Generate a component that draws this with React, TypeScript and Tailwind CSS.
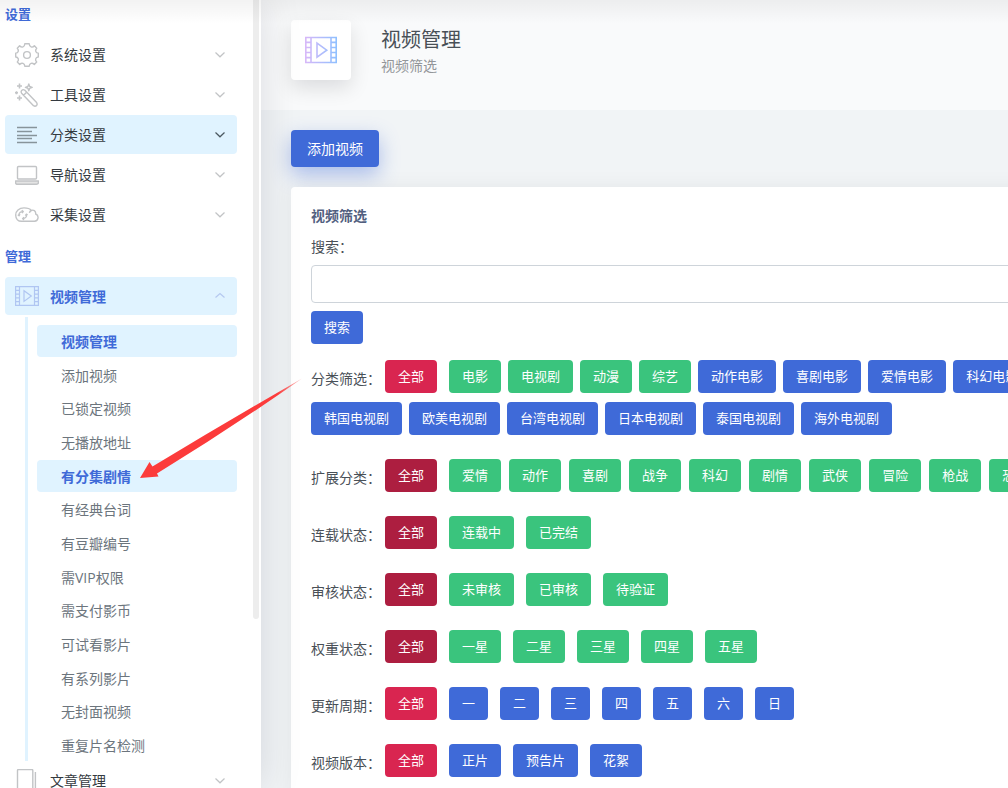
import React from "react";

const SETTINGS = [
  { label: "系统设置", icon: "gear" },
  { label: "工具设置", icon: "wand" },
  { label: "分类设置", icon: "lines", active: true },
  { label: "导航设置", icon: "laptop" },
  { label: "采集设置", icon: "cloud" },
];

const VIDEO_MENU = [
  "视频管理",
  "添加视频",
  "已锁定视频",
  "无播放地址",
  "有分集剧情",
  "有经典台词",
  "有豆瓣编号",
  "需VIP权限",
  "需支付影币",
  "可试看影片",
  "有系列影片",
  "无封面视频",
  "重复片名检测",
];

const TONES = {
  red: "bg-[#d92550]",
  crimson: "bg-[#ad1e40]",
  green: "bg-[#3ac47d]",
  blue: "bg-[#3f6ad8]",
};

type Tone = keyof typeof TONES;

const STATUS_ROWS: { label: string; all: Tone; tone: Tone; items: string[] }[] = [
  { label: "连载状态", all: "crimson", tone: "green", items: ["连载中", "已完结"] },
  { label: "审核状态", all: "crimson", tone: "green", items: ["未审核", "已审核", "待验证"] },
  { label: "权重状态", all: "crimson", tone: "green", items: ["一星", "二星", "三星", "四星", "五星"] },
  { label: "更新周期", all: "red", tone: "blue", items: ["一", "二", "三", "四", "五", "六", "日"] },
  { label: "视频版本", all: "red", tone: "blue", items: ["正片", "预告片", "花絮"] },
];

const FilmIcon = ({ className, stroke = "currentColor" }: { className: string; stroke?: string }) => (
  <svg viewBox="0 0 24 24" className={className} fill="none" stroke={stroke} strokeWidth="1.2">
    <defs>
      <linearGradient id="film" gradientUnits="userSpaceOnUse" x1="0" y1="0" x2="24" y2="0">
        <stop offset="0" stopColor="#d8b8f8" />
        <stop offset="1" stopColor="#8fc0ff" />
      </linearGradient>
    </defs>
    <path d="M.6 2.600h22.800v18.800H.6zM4.500 2.500v19M19.500 2.500v19" />
    <path d="M.5 6.300h4M.5 10.100h4M.5 13.900h4M.5 17.700h4M19.500 6.300h4M19.500 10.100h4M19.500 13.900h4M19.500 17.700h4" />
    <path d="M9 6.800v10.600l7.300-5.300z" />
  </svg>
);

const MenuIcon = ({ name }: { name: string }) => {
  const props = {
    viewBox: "0 0 24 24",
    className: "size-6 shrink-0",
    fill: "none",
    stroke: "currentColor",
    strokeWidth: 1.4,
    strokeLinejoin: "round" as const,
  };
  if (name === "gear")
    return (
      <svg {...props}>
        <circle cx="12" cy="12" r="3.400" />
        <path d="M9.800.8h4.400q.1 2.500 1.900 3.100 1.700.7 3.300-1.200l2.300 2.500q-1.500 1.800-.9 3.200.6 1.600 2.500 1.700v3.900q-2 .1-2.600 1.800-.6 1.500 1 3.200l-2.400 2.400q-1.700-1.600-3.200-1-1.800.7-1.900 2.800H9.800q-.1-2.100-1.800-2.800-1.600-.6-3.300 1l-2.400-2.400q1.600-1.700 1-3.200-.7-1.700-2.600-1.800v-3.900q1.900-.1 2.500-1.700.6-1.400-.9-3.200l2.300-2.500q1.700 1.900 3.400 1.200Q9.700 3.300 9.800.8z" />
      </svg>
    );
  if (name === "wand")
    return (
      <svg {...props}>
        <path d="M6.700 7.400q1.300-1.400 2.900-.3l12 12.500q1.100 1.700-.1 3-1.400 1.200-3 .1L6.600 10.200q-1-1.400.1-2.800zM8.600 12.200l3-3" />
        <path d="M13.800 1l.9 2.500 2.500.9-2.500.9-.9 2.500-.9-2.500-2.500-.9 2.500-.9z" />
        <path d="M4.500.5v5M2 3h5M4.500 12.500v5M2 15h5M1.500 8.300v3M0 9.800h3" strokeWidth="1.600" />
      </svg>
    );
  if (name === "lines")
    return (
      <svg {...props} strokeWidth="1.400">
        <path d="M2 4.500h20M2 8.500h15M2 12.500h20M2 15.500h15M2 19.500h20" />
      </svg>
    );
  if (name === "laptop")
    return (
      <svg {...props}>
        <rect x="2.500" y="3.500" width="19" height="12.500" rx="1" />
        <path d="M.6 18h22.800v1.700q0 1.500-2 1.500H2.600q-2 0-2-1.500z" fill="#e4e4e4" />
      </svg>
    );
  if (name === "cloud")
    return (
      <svg {...props}>
        <path d="M6.500 18.300h13a3.800 3.800 0 0 0 1.200-7.300c.3-3.200-2.300-4.500-4.400-3.500C14.800 5.500 12.500 4.900 9 4.900 4 4.900.7 8 .7 12s2.500 6.300 5.800 6.300zM16.300 7.500q-1.500.7-1.900 2.300" />
        <path d="M4 12.600c-.3-2.600 1.600-4.100 3.800-4M5 11.200l-1 1.600-1.200-1M11.500 11.400c.6 2.500-1.300 4.100-3.500 4.200M10.300 12.700l1.100-1.600 1.200 1M6.700 7.200l1.600 1.400L7 10.100M9 14.100l-1.500 1.500L9 17" strokeWidth="1.300" />
      </svg>
    );
  return (
    <svg {...props}>
      <path d="M2.500 24V1.500q0-1 1-1h13.300q1 0 1 1V24M20.400 3v21" />
    </svg>
  );
};

const Chevron = ({ up, dark }: { up?: boolean; dark?: boolean }) => (
  <svg
    viewBox="0 0 10 10"
    className={`size-[10px] ${dark ? "text-[#4b5860]" : up ? "text-[#b5c8f0]" : "text-[#c2c4c6]"}`}
    fill="none"
    stroke="currentColor"
    strokeWidth="1.200"
  >
    <path d={up ? "M.5 6.500 5 2.500l4.500 4" : "M.5 2.500 5 6.800l4.500-4.300"} />
  </svg>
);

const Chip = ({ tone, children }: { tone: Tone; children: React.ReactNode }) => (
  <button className={`h-[33px] shrink-0 whitespace-nowrap rounded px-[13px] text-[13px] text-white ${TONES[tone]}`}>
    {children}
  </button>
);

const Sidebar = () => (
  <aside className="relative z-10 flex w-[261px] shrink-0 bg-white shadow-[0_0_40px_rgba(8,10,37,0.13)]">
    <nav className="ml-[5px] w-[232px] text-[#343a40]">
      <h5 className="mt-1 h-5 text-[13px] font-bold leading-5 text-[#3f6ad8]">设置</h5>
      <ul className="mt-[11px] flex flex-col gap-px">
        {SETTINGS.map((item) => (
          <li key={item.label}>
            <button className={`flex h-[39px] w-full items-center rounded px-[10px] ${item.active ? "bg-[#e0f3ff]" : ""}`}>
              <span className={item.active ? "text-[#87949b]" : "text-[#c2c4c6]"}>
                <MenuIcon name={item.icon} />
              </span>
              <span className="ml-[11px]">{item.label}</span>
              <span className="ml-auto mr-[2px]">
                <Chevron dark={item.active} />
              </span>
            </button>
          </li>
        ))}
      </ul>
      <h5 className="mt-3 h-5 text-[13px] font-bold leading-5 text-[#3f6ad8]">管理</h5>
      <button className="mt-[11px] flex h-[38px] w-full items-center rounded bg-[#e0f3ff] px-[10px] font-bold text-[#3f6ad8]">
        <FilmIcon className="size-6 text-[#b0c6f2]" />
        <span className="ml-[11px]">视频管理</span>
        <span className="ml-auto mr-[2px]">
          <Chevron up />
        </span>
      </button>
      <div className="ml-5 mt-[2px] border-l-[3px] border-[#e0f3ff] pl-[9px] pt-2">
        <ul className="flex h-[436px] flex-col justify-between">
          {VIDEO_MENU.map((label) => {
            const active = label === "视频管理" || label === "有分集剧情";
            return (
              <li key={label}>
                <a
                  href="#"
                  className={`block h-8 rounded px-6 leading-[33px] ${active ? "bg-[#e0f3ff] font-bold text-[#3f6ad8]" : "text-[#6c757d]"}`}
                >
                  {label}
                </a>
              </li>
            );
          })}
        </ul>
      </div>
      <button className="flex h-[39px] w-full items-center px-[10px]">
        <span className="text-[#c2c4c6]">
          <MenuIcon name="doc" />
        </span>
        <span className="ml-[11px]">文章管理</span>
        <span className="ml-auto mr-[2px]">
          <Chevron />
        </span>
      </button>
    </nav>
    <div className="ml-4 h-[619px] w-[6px] rounded-b-full bg-[#ededed]" />
  </aside>
);

const Filters = () => (
  <section className="min-w-[780px] rounded bg-white px-5 pt-[19px] shadow-[0_0_20px_rgba(4,9,20,0.06)]">
    <h5 className="h-5 font-bold leading-5 text-[#525f7f]">视频筛选</h5>
    <label htmlFor="search" className="mt-[11px] block h-5 leading-5">
      搜索：
    </label>
    <input id="search" className="mt-2 block h-[38px] w-full rounded border border-[#ced4da] px-3" />
    <div className="mt-2 flex">
      <Chip tone="blue">搜索</Chip>
    </div>

    <div className="mt-4 flex flex-col gap-[9px]">
      <div className="flex items-center">
        <span className="w-[74px] shrink-0 pt-1">分类筛选：</span>
        <Chip tone="red">全部</Chip>
        <div className="ml-3 flex gap-[7px]">
          {["电影", "电视剧", "动漫", "综艺"].map((t) => (
            <Chip key={t} tone="green">{t}</Chip>
          ))}
          {["动作电影", "喜剧电影", "爱情电影", "科幻电影"].map((t) => (
            <Chip key={t} tone="blue">{t}</Chip>
          ))}
        </div>
      </div>
      <div className="flex gap-[7px]">
        {["韩国电视剧", "欧美电视剧", "台湾电视剧", "日本电视剧", "泰国电视剧", "海外电视剧"].map((t) => (
          <Chip key={t} tone="blue">{t}</Chip>
        ))}
      </div>
    </div>

    <div className="mt-6 flex flex-col gap-6 pb-6">
      <div className="flex items-center">
        <span className="w-[74px] shrink-0 pt-1">扩展分类：</span>
        <Chip tone="crimson">全部</Chip>
        <div className="ml-3 flex gap-2">
          {["爱情", "动作", "喜剧", "战争", "科幻", "剧情", "武侠", "冒险", "枪战", "恐怖"].map((t) => (
            <Chip key={t} tone="green">{t}</Chip>
          ))}
        </div>
      </div>
      {STATUS_ROWS.map((row) => (
        <div key={row.label} className="flex items-center">
          <span className="w-[74px] shrink-0 pt-1">{row.label}：</span>
          <div className="flex gap-3">
            <Chip tone={row.all}>全部</Chip>
            {row.items.map((t) => (
              <Chip key={t} tone={row.tone}>{t}</Chip>
            ))}
          </div>
        </div>
      ))}
    </div>
  </section>
);

const App = () => {
  return (
    <div className="relative flex h-screen overflow-hidden bg-[#f1f4f6] font-['Open_Sans','Noto_Sans_CJK_SC',sans-serif] text-[14px] text-[#495057]">
      <Sidebar />
      <main className="min-w-0 flex-1">
        <header className="flex h-[110px] bg-[#f9fafb] pl-[30px] pt-5">
          <div className="flex size-[60px] items-center justify-center rounded bg-white shadow-[0_8px_20px_rgba(4,9,20,0.12)]">
            <FilmIcon className="size-8" stroke="url(#film)" />
          </div>
          <div className="ml-[30px] pt-1">
            <h1 className="text-[20px] leading-8">视频管理</h1>
            <p className="leading-5 text-[#939699]">视频筛选</p>
          </div>
        </header>
        <div className="pl-[30px] pt-5">
          <button className="mb-5 block h-[37px] rounded bg-[#3f6ad8] px-4 text-white shadow-[0_8px_20px_rgba(63,106,216,0.4)]">
            添加视频
          </button>
          <Filters />
        </div>
      </main>
      <div className="pointer-events-none absolute inset-x-0 top-0 z-20 h-6 bg-linear-to-b from-black/5 to-transparent" />
      <svg
        viewBox="0 0 166 104"
        className="pointer-events-none absolute left-[138px] top-[377px] z-20 h-[104px] w-[166px]"
      >
        <defs>
          <linearGradient id="arrow" x1="0" y1="0" x2="1" y2="0">
            <stop offset="0.850" stopColor="#fc3b3b" />
            <stop offset="1" stopColor="#fc3b3b" stopOpacity="0.3" />
          </linearGradient>
        </defs>
        <path d="M2 101 11.500 85l3 4.500Q90 44 164 1.500 92 52 19 96.500l1.500 3z" fill="url(#arrow)" />
      </svg>
    </div>
  );
};

export default App;
